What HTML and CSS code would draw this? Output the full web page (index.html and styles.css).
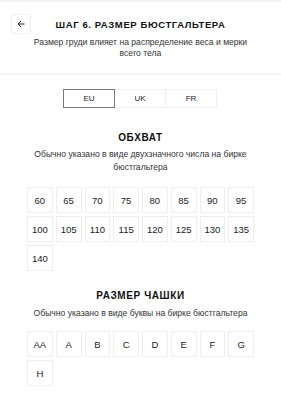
FILE: index.html
```html
<!DOCTYPE html>
<html lang="ru">
<head>
    <meta charset="UTF-8">
    <meta name="viewport" content="width=device-width, initial-scale=1.0">
    <title>Шаг 6. Размер бюстгальтера</title>
    <link rel="stylesheet" href="styles.css">
</head>
<body>
    <div class="header">
        <button class="back" aria-label="Назад">
            <svg width="8" height="8" viewBox="0 0 8 8" fill="none" stroke="#222" stroke-width="1">
                <path d="M7.5 4H1M4 1L1 4l3 3"/>
            </svg>
        </button>
        <h1>Шаг 6. Размер бюстгальтера</h1>
        <p class="subtitle">Размер груди влияет на распределение веса и мерки всего тела</p>
    </div>

    <div class="switch">
        <button class="active">EU</button>
        <button>UK</button>
        <button>FR</button>
    </div>

    <div class="section">
        <h2>Обхват</h2>
        <p class="desc">Обычно указано в виде двухзначного числа на бирке бюстгальтера</p>
        <div class="grid">
            <button>60</button><button>65</button><button>70</button><button>75</button>
            <button>80</button><button>85</button><button>90</button><button>95</button>
            <button>100</button><button>105</button><button>110</button><button>115</button>
            <button>120</button><button>125</button><button>130</button><button>135</button>
            <button>140</button>
        </div>
    </div>

    <div class="section cup">
        <h2>Размер чашки</h2>
        <p class="desc">Обычно указано в виде буквы на бирке бюстгальтера</p>
        <div class="grid">
            <button>AA</button><button>A</button><button>B</button><button>C</button>
            <button>D</button><button>E</button><button>F</button><button>G</button>
            <button>H</button>
        </div>
    </div>
</body>
</html>
```

FILE: styles.css
```css
body {
    margin: 0;
    font-family: "Liberation Sans", Arial, sans-serif;
    background-color: #fff;
    color: #222;
    border-top: 2px solid #f4f4f4;
}
button {
    font-family: inherit;
    background: #fff;
    color: #222;
    cursor: pointer;
    padding: 0;
}
.header {
    display: grid;
    grid-template-columns: 20px 1fr 20px;
    padding: 12px 11px 14px;
    border-bottom: 2px solid #f4f4f4;
}
.back {
    width: 20px;
    height: 20px;
    border: 1px solid #eee;
    border-radius: 3px;
    display: flex;
    align-items: center;
    justify-content: center;
}
h1 {
    grid-column: 2;
    margin: 0;
    font-size: 9.5px;
    line-height: 22px;
    font-weight: bold;
    letter-spacing: 0.6px;
    text-transform: uppercase;
    text-align: center;
    color: #111;
}
.subtitle {
    grid-column: 2;
    margin: 1px 0 0;
    font-size: 8.6px;
    line-height: 11px;
    text-align: center;
    color: #333;
}
.switch {
    display: flex;
    justify-content: center;
    margin-top: 14px;
}
.switch button {
    width: 52px;
    height: 19px;
    font-size: 8px;
    border: 1px solid #eee;
    margin-left: -1px;
}
.switch button.active {
    border-color: #777;
    position: relative;
}
.section {
    padding: 0 27px;
    margin-top: 24px;
    text-align: center;
}
.section.cup {
    margin-top: 19px;
}
h2 {
    margin: 0;
    font-size: 10px;
    line-height: 12px;
    font-weight: bold;
    letter-spacing: 0.6px;
    text-transform: uppercase;
    color: #111;
}
.desc {
    margin: 4px 0 0;
    font-size: 8.6px;
    line-height: 13px;
    color: #333;
}
.cup .desc {
    margin-top: 5px;
}
.grid {
    display: grid;
    grid-template-columns: repeat(8, 1fr);
    gap: 3px;
    margin-top: 13px;
}
.cup .grid {
    margin-top: 11px;
}
.grid button {
    height: 26px;
    border: 1px solid #eee;
    font-size: 9.5px;
}
```
